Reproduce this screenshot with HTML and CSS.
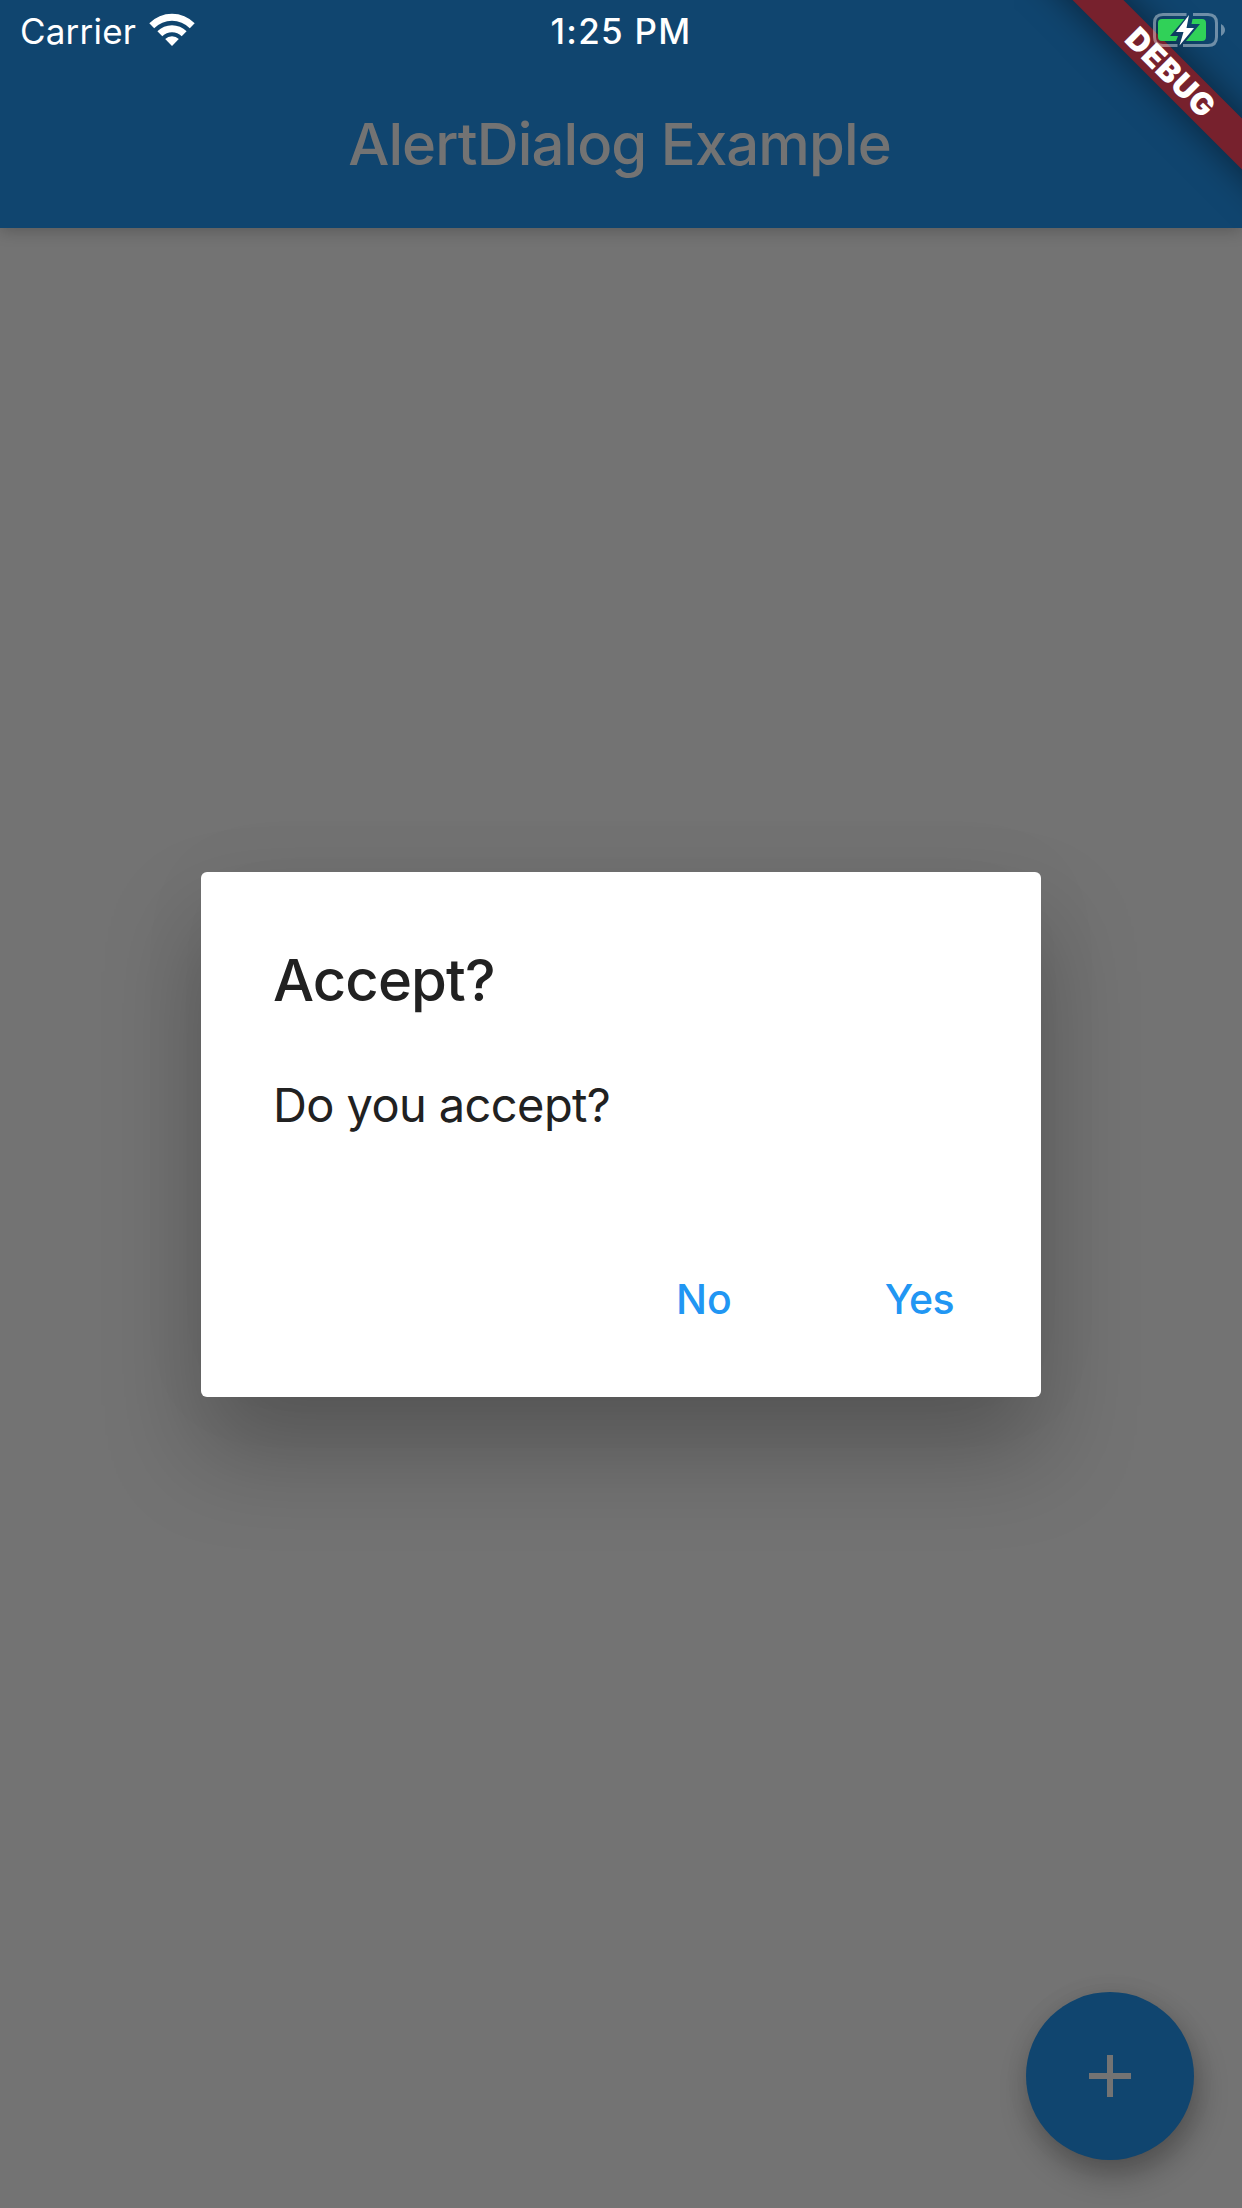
FILE: index.html
```
<!DOCTYPE html>
<html lang="en">
<head>
  <meta charset="UTF-8">
  <title>AlertDialog Example</title>
  <link rel="stylesheet" href="styles.css">
</head>
<body>
  <div class="screen">
    <header class="app-bar">
      <div class="status-bar">
        <div class="carrier">
          <span class="carrier-name">Carrier</span>
          <svg class="wifi" width="46" height="34" viewBox="0 0 46 34" fill="#fff">
            <path d="M0.3 10.2 A32.1 32.1 0 0 1 45.7 10.2 L40.8 15.2 A25.1 25.1 0 0 0 5.2 15.2 Z"/>
            <path d="M8.4 18.3 A20.7 20.7 0 0 1 37.6 18.3 L32.7 23.2 A13.7 13.7 0 0 0 13.3 23.2 Z"/>
            <path d="M16.2 26.1 A9.6 9.6 0 0 1 29.8 26.1 L23 33 Z"/>
          </svg>
        </div>
        <span class="time">1:25 PM</span>
        <svg class="battery" width="74" height="36" viewBox="0 0 74 36">
          <path d="M34.5 2.500 H11 Q2.500 2.500 2.500 11 V25 Q2.500 33.500 11 33.500 H25.500 M31 33.500 H56 Q64.500 33.500 64.500 25 V11 Q64.500 2.500 56 2.500 H41" fill="none" stroke="#fff" stroke-opacity="0.4" stroke-width="3"/>
          <path d="M69 12 Q73 14.500 73 18 Q73 21.500 69 24 Z" fill="#fff" fill-opacity="0.4"/>
          <path d="M10 7 H32.500 L18 24 H26 L24 29 H10 Q6 29 6 25 V11 Q6 7 10 7 Z" fill="#30d158"/>
          <path d="M40.500 7 H50 Q54 7 54 11 V25 Q54 29 50 29 H34 L48 12 H39.500 Z" fill="#30d158"/>
          <path d="M37 3 L24 20 H31.500 L27.500 33.500 L42 16 H34.500 Z" fill="#fff"/>
        </svg>
      </div>
      <h1 class="app-title">AlertDialog Example</h1>
      <div class="debug-banner"><span class="debug-text">DEBUG</span></div>
    </header>

    <main class="content">
      <div class="dialog">
        <h2 class="dialog-title">Accept?</h2>
        <p class="dialog-text">Do you accept?</p>
        <div class="dialog-actions">
          <button class="btn btn-no">No</button>
          <button class="btn btn-yes">Yes</button>
        </div>
      </div>
    </main>

    <button class="fab">
      <svg width="42" height="42" viewBox="0 0 42 42">
        <path d="M21 0 V42 M0 21 H42" stroke="#737373" stroke-width="6"/>
      </svg>
    </button>
  </div>
</body>
</html>
```

FILE: styles.css
```
* {
  box-sizing: border-box;
}

body {
  margin: 0;
  font-family: Inter, "Liberation Sans", sans-serif;
  background-color: #737373;
}

.screen {
  position: relative;
  display: flex;
  flex-direction: column;
  width: 1242px;
  height: 2208px;
  overflow: hidden;
}

.app-bar {
  position: relative;
  height: 228px;
  background-color: #10456f;
  box-shadow: 0 3px 15px rgba(0, 0, 0, 0.22);
}

.status-bar {
  position: relative;
  z-index: 2;
  display: grid;
  grid-template-columns: 1fr auto 1fr;
  align-items: center;
  height: 60px;
  padding: 0 16px;
  color: #fff;
  font-size: 35px;
}

.carrier {
  display: flex;
  align-items: center;
  gap: 13px;
  padding-left: 4px;
}

.carrier-name {
  padding-top: 2px;
  letter-spacing: 0.2px;
}

.wifi {
  margin-bottom: 1px;
}

.time {
  padding-top: 2px;
  font-weight: 500;
  letter-spacing: 1.3px;
}

.battery {
  justify-self: end;
}

.app-title {
  margin: 0;
  padding-right: 3px;
  color: #737373;
  font-size: 58px;
  font-weight: 500;
  letter-spacing: -0.9px;
  line-height: 168px;
  text-align: center;
}

/* ribbon across the top right corner */
.debug-banner {
  position: absolute;
  top: 0;
  right: 0;
  z-index: 1;
  width: 228px;
  height: 228px;
  overflow: hidden;
}

.debug-text {
  position: absolute;
  top: 54px;
  left: -44px;
  width: 400px;
  height: 36px;
  padding-left: 2px;
  color: #fff;
  background-color: #77212d;
  box-shadow: 0 0 36px rgba(0, 0, 0, 0.5);
  font-size: 31px;
  font-weight: 900;
  letter-spacing: 0.9px;
  line-height: 35px;
  text-align: center;
  transform: rotate(45deg);
}

.content {
  display: flex;
  flex: 1;
  align-items: center;
  justify-content: center;
  /* the dialog is centered below the 60px status bar */
  margin-top: -168px;
}

.dialog {
  position: relative;
  z-index: 3;
  width: 840px;
  height: 525px;
  padding: 71px 72px;
  border-radius: 6px;
  color: #212121;
  background-color: #fff;
  box-shadow: 0 54px 96px rgba(0, 0, 0, 0.25), 0 0 90px rgba(0, 0, 0, 0.03);
}

.dialog-title {
  margin: 0;
  font-size: 58px;
  font-weight: 500;
  letter-spacing: -0.9px;
  line-height: 74px;
}

.dialog-text {
  margin: 60px 0 0;
  font-size: 47px;
  letter-spacing: -0.6px;
  line-height: 56px;
}

.dialog-actions {
  display: flex;
  justify-content: flex-end;
  margin: 136px 15px 0 0;
}

.btn {
  padding: 0;
  border: none;
  color: #2196f3;
  background: none;
  font-family: inherit;
  font-size: 41px;
  font-weight: 500;
  line-height: 60px;
}

.btn-yes {
  margin-left: 153px;
  letter-spacing: -0.6px;
}

.fab {
  position: absolute;
  right: 48px;
  bottom: 48px;
  display: flex;
  align-items: center;
  justify-content: center;
  width: 168px;
  height: 168px;
  padding: 0;
  border: none;
  border-radius: 50%;
  background-color: #10456f;
  box-shadow: 4px 15px 30px rgba(0, 0, 0, 0.29), 0 0 27px rgba(0, 0, 0, 0.05);
}
```
